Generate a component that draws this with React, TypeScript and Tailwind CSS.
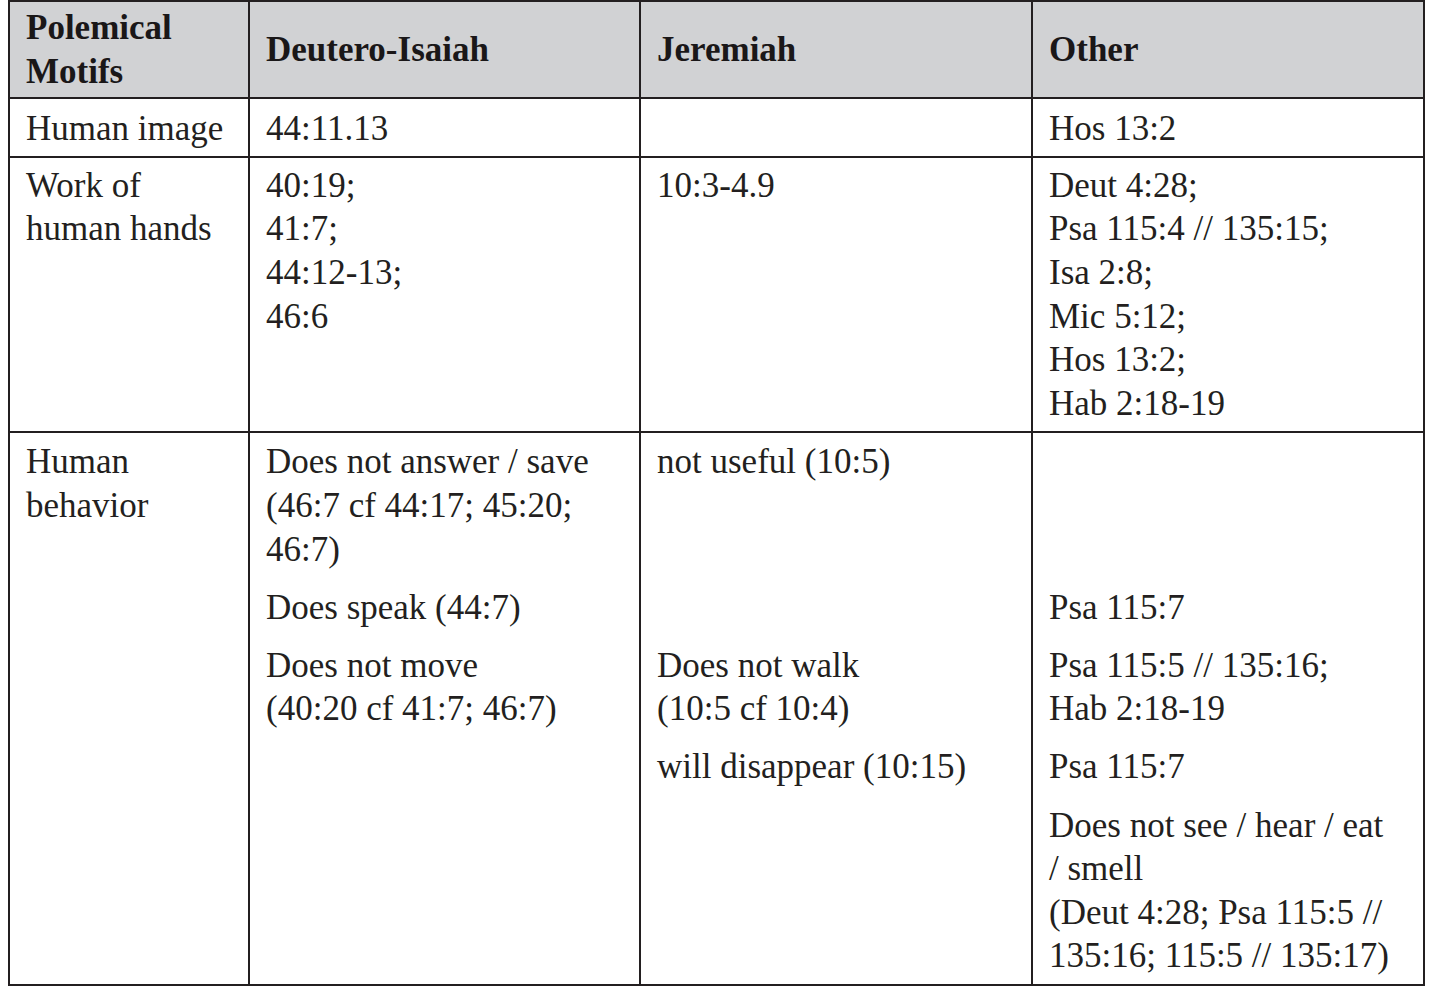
type Cell = string[];

const subRows: { di: Cell; jer: Cell; other: Cell }[] = [
  { di: ["Does not answer / save", "(46:7 cf 44:17; 45:20;", "46:7)"], jer: ["not useful (10:5)"], other: [] },
  { di: ["Does speak (44:7)"], jer: [], other: ["Psa 115:7"] },
  { di: ["Does not move", "(40:20 cf 41:7; 46:7)"], jer: ["Does not walk", "(10:5 cf 10:4)"], other: ["Psa 115:5 // 135:16;", "Hab 2:18-19"] },
  { di: [], jer: ["will disappear (10:15)"], other: ["Psa 115:7"] },
  { di: [], jer: [], other: ["Does not see / hear / eat", "/ smell", "(Deut 4:28; Psa 115:5 //", "135:16; 115:5 // 135:17)"] },
];

function Lines({ lines }: { lines: Cell }) {
  return (
    <>
      {lines.map((l, i) => (
        <div key={i} className="whitespace-nowrap">
          {l}
        </div>
      ))}
    </>
  );
}

export default function App() {
  const cell = "border-r-2 border-b-2 border-[#231f20] pl-[16px] pr-[8px]";
  const head = `${cell} bg-[#d1d2d4] font-bold text-[#1a1718] flex flex-col justify-center pt-[4px] pb-[4px]`;
  const row1 = `${cell} pt-[8px] pb-[5px]`;
  const row2 = `${cell} pt-[6px] pb-[6px]`;

  return (
    <div className="min-h-screen bg-white font-['Liberation_Serif','Times_New_Roman',serif] text-[35px] leading-[43.6px] text-[#231f20]">
      <div className="ml-[8px] grid w-fit grid-cols-[240px_391px_392px_392px] border-l-2 border-t-2 border-[#231f20]">
        <div className={head}>
          <Lines lines={["Polemical", "Motifs"]} />
        </div>
        <div className={head}>Deutero-Isaiah</div>
        <div className={head}>Jeremiah</div>
        <div className={head}>Other</div>

        <div className={row1}>Human image</div>
        <div className={row1}>44:11.13</div>
        <div className={row1}></div>
        <div className={row1}>Hos 13:2</div>

        <div className={row2}>
          <Lines lines={["Work of", "human hands"]} />
        </div>
        <div className={row2}>
          <Lines lines={["40:19;", "41:7;", "44:12-13;", "46:6"]} />
        </div>
        <div className={row2}>10:3-4.9</div>
        <div className={row2}>
          <Lines
            lines={["Deut 4:28;", "Psa 115:4 // 135:15;", "Isa 2:8;", "Mic 5:12;", "Hos 13:2;", "Hab 2:18-19"]}
          />
        </div>

        <div className={`${cell} row-span-5 pt-[7px]`}>
          <Lines lines={["Human", "behavior"]} />
        </div>
        {subRows.map((r, i) => {
          const first = i === 0;
          const last = i === subRows.length - 1;
          const cls = `border-r-2 border-[#231f20] pl-[16px] pr-[8px] ${first ? "pt-[7px]" : ""} ${
            last ? "border-b-2 pb-[6px]" : "pb-[14.5px]"
          }`;
          return [
            <div key={`d${i}`} className={cls}>
              <Lines lines={r.di} />
            </div>,
            <div key={`j${i}`} className={cls}>
              <Lines lines={r.jer} />
            </div>,
            <div key={`o${i}`} className={cls}>
              <Lines lines={r.other} />
            </div>,
          ];
        })}
      </div>
    </div>
  );
}
